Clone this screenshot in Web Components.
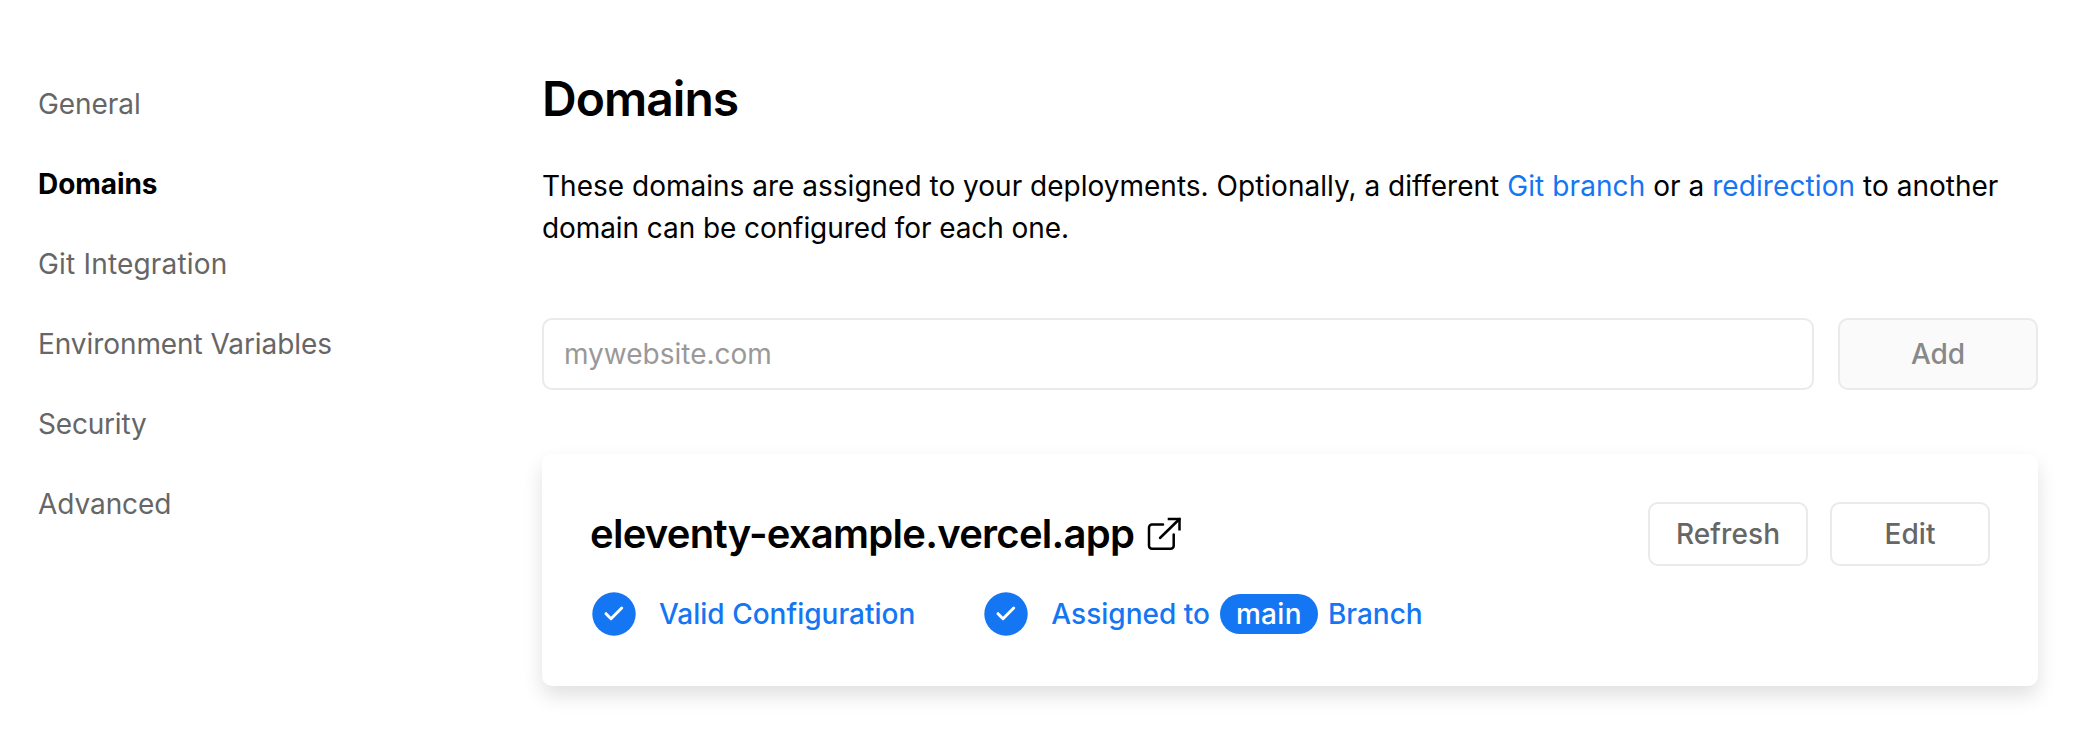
<!DOCTYPE html>
<html lang="en">
<head>
<meta charset="utf-8">
<title>Domains</title>
<style>
html,body{margin:0;background:#fff}
body{font-family:Inter,"Liberation Sans",sans-serif;font-size:28px;color:#000;width:2080px;height:740px;overflow:hidden}
</style>
</head>
<body>
<settings-page></settings-page>
<script>
const define=(name,css,html)=>customElements.define(name,class extends HTMLElement{
  constructor(){super();this.attachShadow({mode:'open'}).innerHTML=`<style>*{box-sizing:border-box}${css}</style>${html}`;}
});

define('nav-item',`:host{display:flex;align-items:center;height:80px;color:#666;line-height:42px;letter-spacing:-.07px}
:host([active]){color:#000;font-weight:700}`,`<slot></slot>`);

define('side-nav',`:host{display:flex;flex-direction:column;padding:64px 0 0 38px;width:542px;flex:none;box-sizing:border-box}
.wide{letter-spacing:.19px}.tight{letter-spacing:-.2px}`,
`<nav-item>General</nav-item><nav-item active>Domains</nav-item><nav-item class="wide">Git Integration</nav-item><nav-item>Environment Variables</nav-item><nav-item class="tight">Security</nav-item><nav-item>Advanced</nav-item>`);

define('text-link',`:host{display:inline;color:#1476f2;letter-spacing:.1px}`,`<slot></slot>`);

define('ui-button',`:host{display:flex;box-sizing:border-box;align-items:center;justify-content:center;width:160px;height:64px;border:2px solid #eaeaea;border-radius:10px;background:#fff;color:#666;font-weight:500;line-height:1;letter-spacing:.1px}
:host([disabled]){width:200px;height:72px;background:#fafafa;color:#888;letter-spacing:0}`,`<slot></slot>`);

define('domain-form',`:host{display:flex;gap:24px}
.field{flex:1;height:72px;border:2px solid #eaeaea;border-radius:10px;display:flex;align-items:center;padding:0 20px;color:#999;background:#fff}`,
`<div class="field">mywebsite.com</div><ui-button disabled>Add</ui-button>`);

define('status-item',`:host{display:flex;align-items:center;color:#1476f2;font-weight:500;white-space:pre}
svg{display:block;width:48px;height:48px;margin-right:21px;flex:none}`,
`<svg viewBox="0 0 24 24" fill="none" stroke-width="1.5" stroke-linecap="round" stroke-linejoin="round"><circle cx="12" cy="12" r="10.85" fill="#1476f2"/><path d="M8 11.857l2.5 2.5L15.857 9" stroke="#fff"/></svg><slot></slot>`);

define('branch-tag',`:host{display:inline-flex;box-sizing:border-box;align-items:center;justify-content:center;height:40px;width:98px;margin:0 10px;border-radius:20px;background:#1476f2;color:#fff;letter-spacing:.3px}`,`<slot></slot>`);

define('domain-card',`:host{display:flex;box-sizing:border-box;flex-direction:column;height:232px;border-radius:10px;background:#fff;box-shadow:0 10px 20px rgba(0,0,0,.12);padding:48px}
.top{display:flex;align-items:center;height:64px;gap:22px}
.name{display:flex;align-items:center;flex:1;font-size:40px;line-height:48px;font-weight:600;letter-spacing:-.74px}
.name svg{width:36px;height:36px;margin-left:11.8px}
.status{display:flex;margin-top:24px;height:48px;gap:67px}`,
`<div class="top"><div class="name"><span>eleventy-example.vercel.app</span><svg viewBox="0 0 36 36" fill="none" stroke="#000" stroke-width="2.5"><path d="M17 8.5H6a3 3 0 00-3 3v18.2a3 3 0 003 3h18.7a3 3 0 003-3V18.5" stroke-linecap="round"/><path d="M21.7 3h11.8v11.5"/><path d="M14 22L33.5 3" stroke-linecap="round"/></svg></div><ui-button>Refresh</ui-button><ui-button>Edit</ui-button></div>
<div class="status"><status-item>Valid Configuration</status-item><status-item>Assigned to<branch-tag>main</branch-tag>Branch</status-item></div>`);

define('domain-settings',`:host{display:block;width:1496px;padding-top:70px}
h1{margin:0;font-size:48px;line-height:58px;font-weight:600;letter-spacing:-.96px}
p{margin:37px 0 69px;line-height:42px;letter-spacing:.01px;white-space:nowrap}
.second{letter-spacing:-.08px}
domain-card{margin-top:64px}`,
`<h1>Domains</h1><p>These domains are assigned to your deployments. Optionally, a different <text-link>Git branch</text-link> or a <text-link>redirection</text-link> to another<br><span class="second">domain can be configured for each one.</span></p><domain-form></domain-form><domain-card></domain-card>`);

define('settings-page',`:host{display:flex}`,`<side-nav></side-nav><domain-settings></domain-settings>`);
</script>
</body>
</html>
